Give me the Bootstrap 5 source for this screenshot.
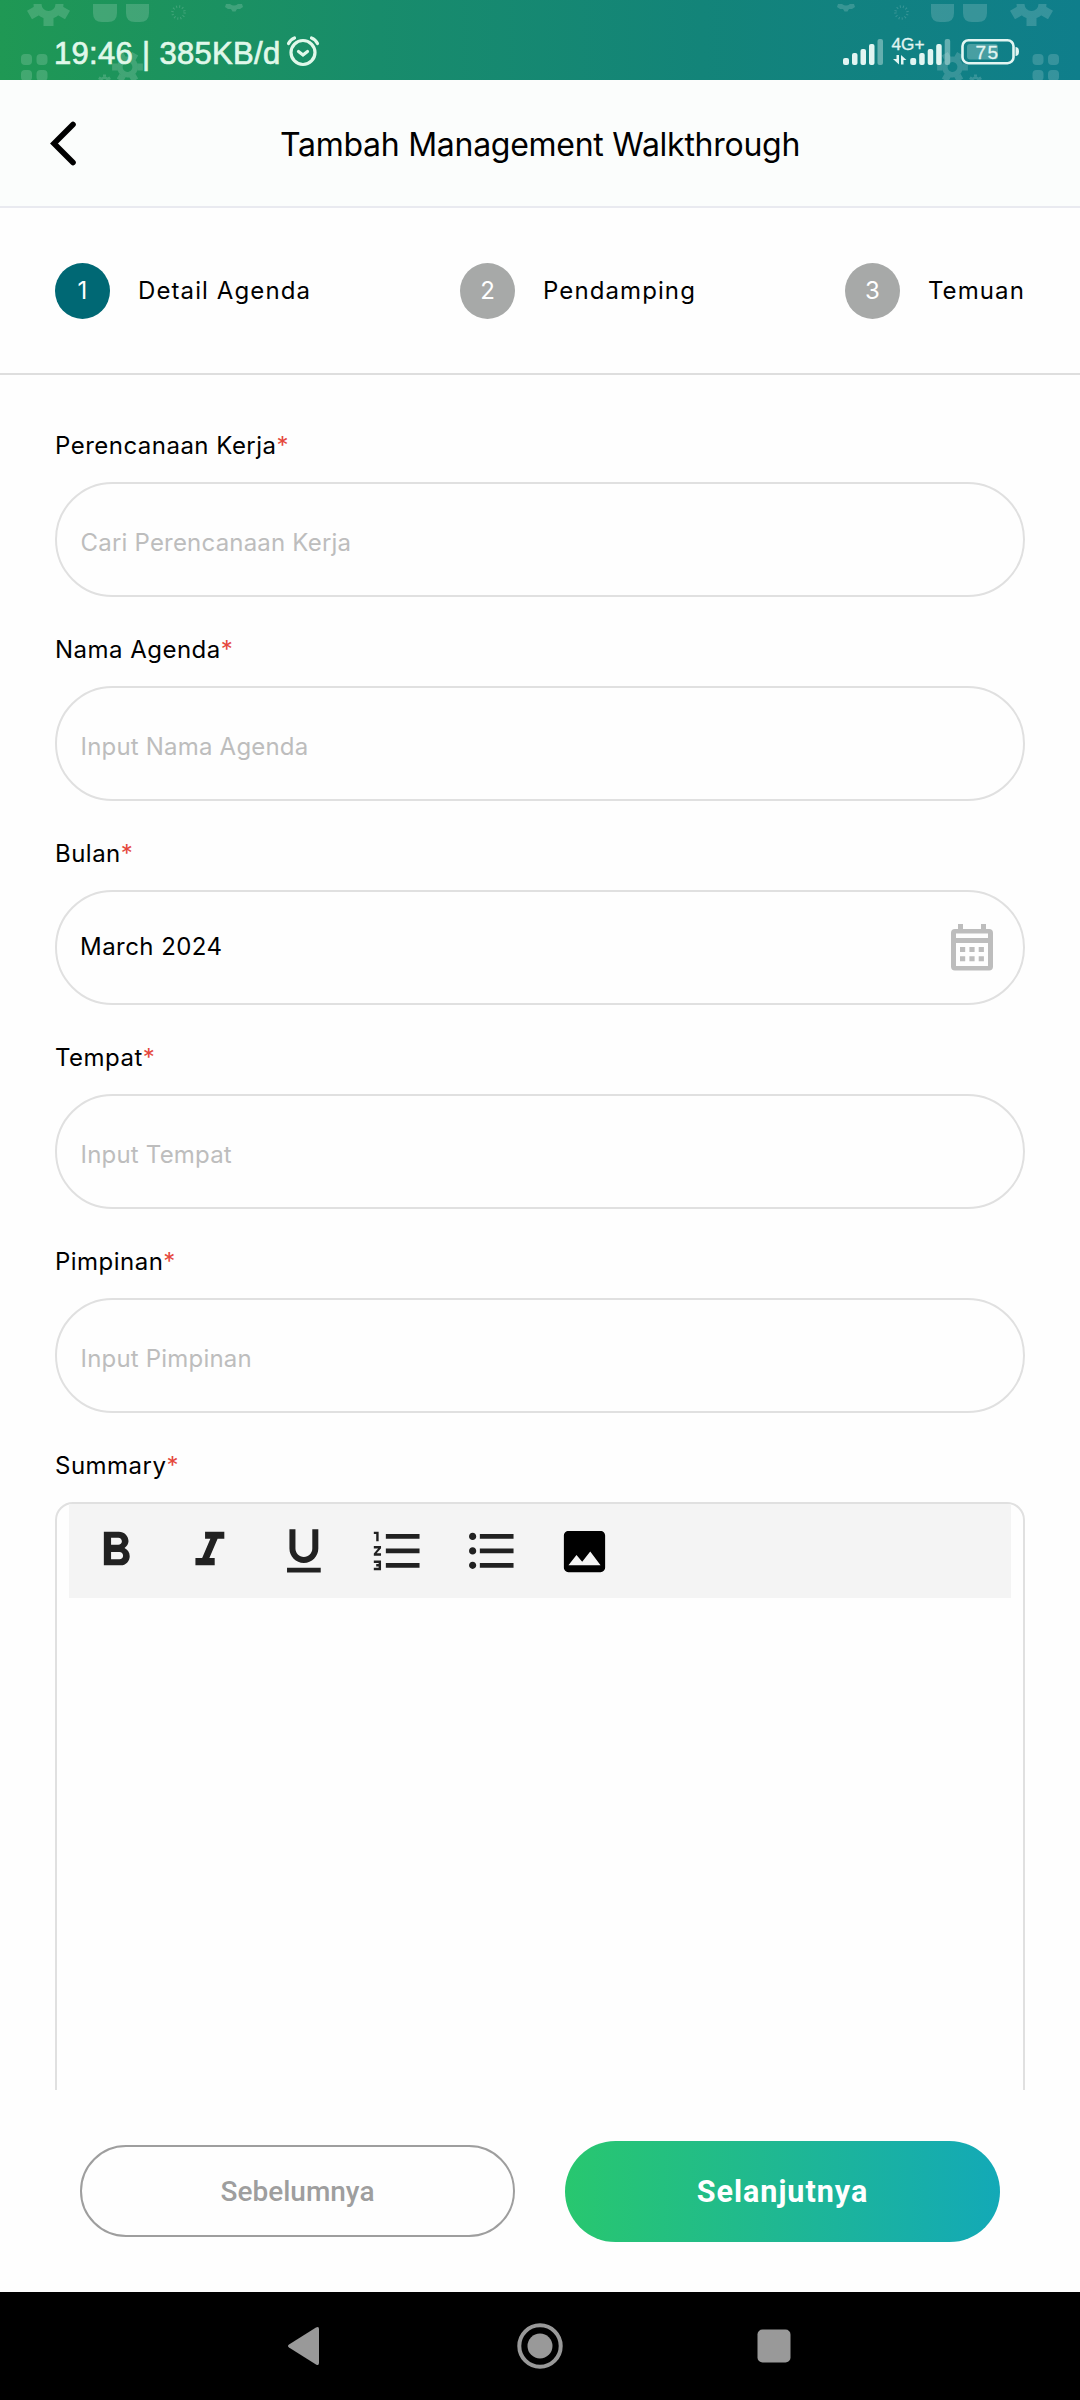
<!DOCTYPE html>
<html lang="id">
<head>
<meta charset="utf-8">
<meta name="viewport" content="width=device-width, initial-scale=1">
<title>Tambah Management Walkthrough</title>
<link href="https://cdn.jsdelivr.net/npm/bootstrap@5.3.0/dist/css/bootstrap.min.css" rel="stylesheet">
<style>
body{font-family:Inter,"Noto Sans",sans-serif;font-size:24px;color:#000;background:#fefefe;height:2400px;overflow:hidden}
.statusbar{height:80px;background:linear-gradient(90deg,#1f9854 0%,#188c6b 35%,#138479 65%,#0f7e8b 100%)}
.clock{font-family:"Liberation Sans",sans-serif;font-size:31px;line-height:36px;letter-spacing:.32px;color:#e0f8ea;padding-left:54px;padding-top:36px;-webkit-text-stroke:.7px #e0f8ea}
.clock span{display:inline-block;width:227px;white-space:nowrap}
.alarm{margin-left:5px;margin-top:34px}
.signals{margin-right:58px}
.appbar{height:128px;background:#fbfdfc;border-bottom:2px solid #e9eaf0}
.appbar h1{font-size:32px;font-weight:400;letter-spacing:-.27px}
.back{margin-left:46px}
.steps{height:167px;border-bottom:2px solid #dedede;padding:0 55px}
.step-no{width:55px;height:56px;background:#a7a9a8;color:#fff;margin-right:28px}
.step-no.current{background:#006874}
.step-label{letter-spacing:1.1px}
.form-area{padding:53px 55px 0;height:1715px;overflow:hidden}
.field{margin-bottom:34px}
.field .form-label{line-height:36px;padding-top:1px;margin-bottom:18px;letter-spacing:.48px}
.field:first-child .form-label{margin-top:-1px}
.req{color:#e5483d}
.pill{height:115px;border:2px solid #e0e0e0;border-radius:58px;background:#fefefe;font-size:24px;letter-spacing:.2px;padding:7px 23.500px 1px;color:#000}
.pill::placeholder{color:#bdbdbd;opacity:1}
.pill.month{padding:0 23px 2px;letter-spacing:.45px}
.cal{position:absolute;right:31px;top:32px}
.editor{border:2px solid #e0e0e0;border-radius:18px;height:800px;padding:0 12px}
.tools{height:94px;background:#f4f4f4}
.tools span{width:94px}
.tools span:last-child{width:91px}
.actions{height:202px;padding:0 80px;gap:50px}
.actions .btn{width:435px;flex:none;font-family:Roboto,sans-serif;border-radius:52px;line-height:1}
.btn-prev{height:92px;border:2px solid #9e9e9e;color:#9e9e9e;font-size:28px;font-weight:500}
.btn-next{height:101px;border:0;color:#fff;font-size:30.500px;letter-spacing:1px;font-weight:700;padding-top:9px;background:linear-gradient(90deg,#28c76f,#20b98f 45%,#13a9b7)}
.btn-prev{padding-top:8px}
.sysnav{height:108px}
</style>
<script src="https://cdn.jsdelivr.net/npm/bootstrap@5.3.0/dist/js/bootstrap.bundle.min.js"></script>
</head>
<body>
<header>
  <div class="statusbar position-relative d-flex overflow-hidden">
    <svg class="position-absolute top-0 start-0" width="1080" height="80" viewBox="0 0 1080 80">
      <defs>
        <clipPath id="band"><rect y="4" width="540" height="76"/></clipPath>
        <g id="cog"><circle r="11" fill="none" stroke="#fff" stroke-width="8"/><path d="M0-14V-22M0 14V22M12-7 19-11M-12 7-19 11M12 7 19 11M-12-7-19-11" stroke="#fff" stroke-width="10" stroke-linejoin="round"/></g>
        <g id="motif" clip-path="url(#band)">
          <use href="#cog" transform="translate(48.500 4)"/>
          <path fill="#fff" d="M93 4h24v9q0 9-9 9h-6q-9 0-9-9zM126 4h23v9q0 9-9 9h-5q-9 0-9-9z"/>
          <circle cx="178.500" cy="12.500" r="6" fill="none" stroke="#fff" stroke-width="2.500" stroke-dasharray="1 2.140"/>
          <path fill="#fff" d="M226 4h4q4 3 8 0h4l1 3-3 2h-3l-1.500 2.500h-3L231 9h-3l-3-2z"/>
          <rect x="21" y="54" width="11" height="11" rx="4" fill="#fff"/><rect x="36.500" y="54" width="11" height="11" rx="4" fill="#fff"/>
          <rect x="21" y="70" width="11" height="11" rx="4" fill="#fff"/><rect x="36.500" y="70" width="11" height="11" rx="4" fill="#fff"/>
          <use href="#cog" transform="translate(127.500 67) rotate(30) scale(.7)"/>
          <use href="#cog" transform="translate(104.500 81) scale(.3)"/>
        </g>
      </defs>
      <use href="#motif" opacity=".16"/>
      <use href="#motif" opacity=".16" transform="translate(1080 0) scale(-1 1)"/>
    </svg>
    <div class="clock position-relative d-flex"><span>19:46 | 385KB/d</span></div>
    <svg class="alarm position-relative" width="36" height="34" viewBox="286 34 36 34" fill="none" stroke="#e0f8ea" stroke-linecap="round">
      <circle cx="303" cy="52.500" r="12" stroke-width="3.200"/><path stroke-width="3.200" d="M298.500 51.500 303 55 307.500 51.500M288.500 43.500Q290.500 39.500 294.500 38M317.500 43.500Q315.500 39.500 311.500 38"/>
    </svg>
    <svg class="signals position-relative ms-auto" width="180" height="80" viewBox="842 0 180 80" fill="#e2f5f2" font-family="Liberation Sans, sans-serif">
      <g id="bars"><rect x="843" y="58" width="6" height="7" rx="2"/><rect x="852" y="53" width="5.500" height="12" rx="2"/><rect x="860.500" y="49" width="5.500" height="16" rx="2"/><rect x="869" y="44" width="5.500" height="21" rx="2"/><rect x="877.500" y="39" width="5.500" height="26" rx="2" opacity=".4"/></g>
      <use href="#bars" x="67.200"/>
      <text x="891.500" y="50" font-size="16" stroke="#e2f5f2" stroke-width=".3" textLength="33" lengthAdjust="spacingAndGlyphs">4G+</text>
      <path d="M896.500 55h2.500v9.500L893 59h3.500zM901 64.500V55l5.500 5H903.500v4.500z"/>
      <rect x="962.500" y="40.200" width="51" height="23" rx="6" fill="none" stroke="#e2f5f2" stroke-width="2.600"/>
      <rect x="967" y="44" width="31" height="15.500" rx="3" opacity=".27"/>
      <path d="M1015.500 47q3.500 0 3.500 4.500t-3.500 4.500z"/>
      <text x="975.500" y="59" font-size="19" stroke="#e2f5f2" stroke-width=".3" textLength="22.500">75</text>
    </svg>
  </div>
  <div class="appbar position-relative d-flex align-items-center justify-content-center">
    <svg class="back position-absolute start-0" width="36" height="50" viewBox="0 0 36 50"><path d="M27 6.500 8 25.500 27 44.500" fill="none" stroke="#000" stroke-width="5.600" stroke-linecap="round"/></svg>
    <h1 class="m-0 pt-1">Tambah Management Walkthrough</h1>
  </div>
</header>
<nav class="steps d-flex align-items-center justify-content-between">
  <div class="d-flex align-items-center"><span class="step-no current rounded-circle d-flex align-items-center justify-content-center">1</span><span class="step-label">Detail Agenda</span></div>
  <div class="d-flex align-items-center"><span class="step-no rounded-circle d-flex align-items-center justify-content-center">2</span><span class="step-label">Pendamping</span></div>
  <div class="d-flex align-items-center"><span class="step-no rounded-circle d-flex align-items-center justify-content-center">3</span><span class="step-label">Temuan</span></div>
</nav>
<main class="form-area">
  <div class="field"><label class="form-label d-block" for="kerja">Perencanaan Kerja<span class="req">*</span></label><input id="kerja" class="form-control pill" placeholder="Cari Perencanaan Kerja"></div>
  <div class="field"><label class="form-label d-block" for="nama">Nama Agenda<span class="req">*</span></label><input id="nama" class="form-control pill" placeholder="Input Nama Agenda"></div>
  <div class="field"><label class="form-label d-block" for="bulan">Bulan<span class="req">*</span></label>
    <div class="position-relative"><input id="bulan" class="form-control pill month" value="March 2024">
      <svg class="cal" width="44" height="50" viewBox="950 922 44 50" fill="#bdbdbd"><path fill-rule="evenodd" d="M955 929h34q4 0 4 4v33.500q0 4-4 4H955q-4 0-4-4V933q0-4 4-4zm1 4.500v4.500h32v-4.500zm0 9.500v23h32v-23z"/><path d="M958 924h5v6h-5zM981 924h5v6h-5zM960 947h5.200v5H960zM969.400 947h5.200v5h-5.200zM978.700 947h5.200v5h-5.200zM960 956.300h5.200v5H960zM969.400 956.300h5.200v5h-5.200zM978.700 956.300h5.200v5h-5.200z"/></svg>
    </div></div>
  <div class="field"><label class="form-label d-block" for="tempat">Tempat<span class="req">*</span></label><input id="tempat" class="form-control pill" placeholder="Input Tempat"></div>
  <div class="field"><label class="form-label d-block" for="pimpinan">Pimpinan<span class="req">*</span></label><input id="pimpinan" class="form-control pill" placeholder="Input Pimpinan"></div>
  <div class="field"><label class="form-label d-block">Summary<span class="req">*</span></label>
    <div class="editor">
      <div class="tools d-flex align-items-center">
        <span class="d-flex justify-content-center"><svg width="57.750" height="57.750" viewBox="0 0 24 24" fill="#212121"><path d="M15.600 10.790c.97-.67 1.650-1.770 1.650-2.790 0-2.260-1.750-4-4-4H7v14h7.040c2.090 0 3.710-1.700 3.710-3.790 0-1.520-.86-2.820-2.150-3.420zM10 6.500h3c.83 0 1.500.67 1.500 1.500s-.67 1.500-1.500 1.500h-3v-3zm3.500 9H10v-3h3.500c.83 0 1.500.67 1.500 1.500s-.67 1.500-1.500 1.500z"/></svg></span>
        <span class="d-flex justify-content-center"><svg width="57.750" height="57.750" viewBox="0 0 24 24" fill="#212121"><path d="M10 4v3h2.210l-3.420 8H6v3h8v-3h-2.210l3.420-8H18V4z"/></svg></span>
        <span class="d-flex justify-content-center"><svg width="57.750" height="57.750" viewBox="0 0 24 24" fill="#212121"><path d="M12 17c3.310 0 6-2.690 6-6V3h-2.500v8c0 1.930-1.570 3.500-3.500 3.500S8.500 12.930 8.500 11V3H6v8c0 3.310 2.690 6 6 6zm-7 2v2h14v-2H5z"/></svg></span>
        <span class="d-flex justify-content-center"><svg width="57.750" height="57.750" viewBox="0 0 24 24" fill="#212121"><path d="M2 17h2v.5H3v1h1v.5H2v1h3v-4H2v1zm1-9h1V4H2v1h1v3zm-1 3h1.800L2 13.100v.9h3v-1H3.200L5 10.900V10H2v1zm5-6v2h14V5H7zm0 14h14v-2H7v2zm0-6h14v-2H7v2z"/></svg></span>
        <span class="d-flex justify-content-center"><svg width="57.750" height="57.750" viewBox="0 0 24 24" fill="#212121"><path d="M4 10.500c-.83 0-1.500.67-1.500 1.500s.67 1.500 1.500 1.500 1.500-.67 1.500-1.500-.67-1.500-1.500-1.500zm0-6c-.83 0-1.500.67-1.500 1.500S3.170 7.500 4 7.500 5.500 6.830 5.500 6 4.830 4.500 4 4.500zm0 12c-.83 0-1.500.68-1.500 1.500s.68 1.500 1.500 1.500 1.500-.68 1.500-1.500-.67-1.500-1.500-1.500zM7 19h14v-2H7v2zm0-6h14v-2H7v2zm0-8v2h14V5H7z"/></svg></span>
        <span class="d-flex justify-content-center"><svg width="55" height="55" viewBox="0 0 24 24"><path d="M21 19V5c0-1.100-.9-2-2-2H5c-1.100 0-2 .9-2 2v14c0 1.100.9 2 2 2h14c1.100 0 2-.9 2-2zM8.500 13.500l2.500 3.010L14.500 12l4.500 6H5l3.500-4.500z"/></svg></span>
      </div>
    </div>
  </div>
</main>
<div class="actions d-flex align-items-center">
  <button class="btn btn-prev">Sebelumnya</button>
  <button class="btn btn-next">Selanjutnya</button>
</div>
<footer class="sysnav bg-black d-flex justify-content-center">
  <svg width="520" height="108" viewBox="280 2292 520 108" fill="#999"><path d="M289 2344.500 316 2327.500Q319 2326 319 2329V2363Q319 2366 316 2364.500L289 2347.500Q287 2346 289 2344.500z"/><circle cx="540" cy="2346" r="12.500"/><circle cx="540" cy="2346" r="20.700" fill="none" stroke="#999" stroke-width="4"/><rect x="757.500" y="2329.500" width="33" height="33" rx="5"/></svg>
</footer>
</body>
</html>
